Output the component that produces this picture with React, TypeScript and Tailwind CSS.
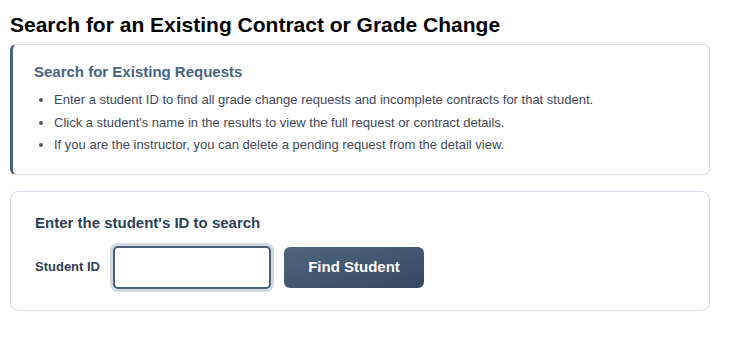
import React, { useState } from 'react';

const tips = [
  'Enter a student ID to find all grade change requests and incomplete contracts for that student.',
  "Click a student's name in the results to view the full request or contract details.",
  'If you are the instructor, you can delete a pending request from the detail view.',
];

export default function App() {
  const [studentId, setStudentId] = useState('');

  return (
    <div className="min-h-screen bg-white px-[10px] pt-[13px] font-['Liberation_Sans',Arial,sans-serif]">
      <h1 className="text-[21px] leading-[24px] font-bold text-black">
        Search for an Existing Contract or Grade Change
      </h1>

      <div className="mt-[7px] w-[700px] rounded-[6px] border border-[#d6dce6] border-l-[3px] border-l-[#4a5f78] pl-[21px] pr-4 pt-[18px] pb-[17px]">
        <h2 className="text-[15px] leading-[18px] font-bold text-[#4a6382]">Search for Existing Requests</h2>
        <ul className="mt-[8px] list-disc pl-[20px] text-[13px] leading-[22.5px] text-[#424856] marker:text-[#555]">
          {tips.map((t) => (
            <li key={t}>{t}</li>
          ))}
        </ul>
      </div>

      <div className="mt-[16px] w-[700px] rounded-[8px] border border-[#d6dce6] pl-[24px] pr-4 pt-[22px] pb-[21px]">
        <h2 className="text-[15px] leading-[18px] font-bold text-[#2e3f5c]">Enter the student's ID to search</h2>
        <div className="mt-[14px] flex items-center">
          <label htmlFor="sid" className="text-[13px] font-bold text-[#2e3f5c]">Student ID</label>
          <input
            id="sid"
            autoFocus
            value={studentId}
            onChange={(e) => setStudentId(e.target.value)}
            className="ml-[13px] h-[43px] w-[158px] rounded-[5px] border-2 border-[#4a5f78] bg-white px-[12px] text-[14px] text-[#222] outline-none ring-[3px] ring-[#d3d9e2]"
          />
          <button className="ml-[13px] h-[41px] w-[140px] rounded-[6px] bg-gradient-to-br from-[#4e6682] to-[#364860] text-[15px] font-bold text-white">
            Find Student
          </button>
        </div>
      </div>
    </div>
  );
}
